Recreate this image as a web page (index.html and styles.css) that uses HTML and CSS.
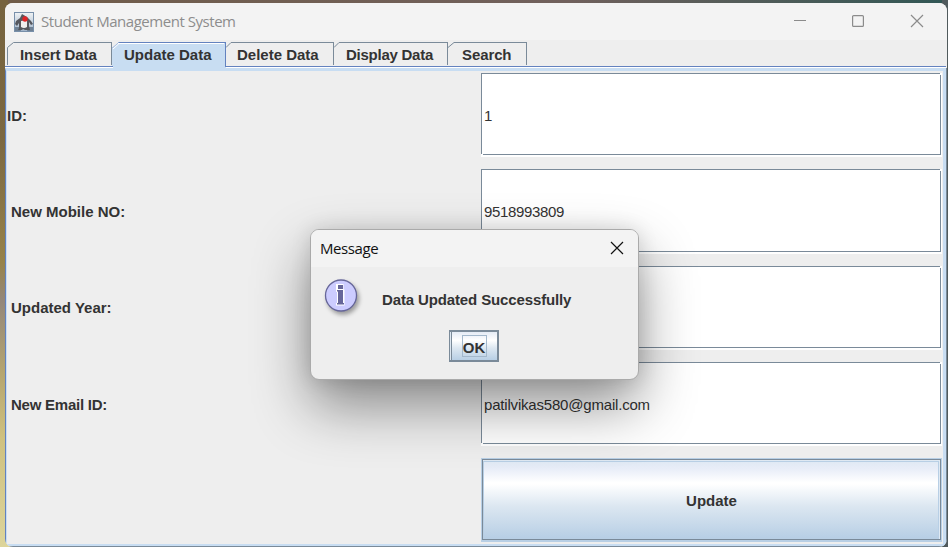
FILE: index.html
```
<!DOCTYPE html>
<html lang="en">
<head>
<meta charset="utf-8">
<title>Student Management System</title>
<link rel="stylesheet" href="styles.css">
</head>
<body>
<main class="window">
  <header class="titlebar">
    <svg class="app-icon" width="20" height="20" viewBox="0 0 20 20">
      <defs><linearGradient id="sky" x2="0" y2="1"><stop stop-color="#f0f3f5"/><stop offset="1" stop-color="#9fb3c8"/></linearGradient></defs>
      <rect x=".5" y=".5" width="19" height="19" fill="url(#sky)" stroke="#7890aa"/>
      <path d="M1 15H6L7 19H1ZM14 15H19V19H13Z" fill="#6f8194"/>
      <path d="M8 2 6 6 2 9 1 12 3 14 5 11 5 16 4 18H8L9 17 11 18H16L15 14 15 10 17 13 19 12 17 9 13 5Z" fill="#55575d"/>
      <path d="M7 9Q10 8 13 9L13 15Q10 17 7 15Z" fill="#eee"/>
      <circle cx="11" cy="7" r="2.7" fill="#df2527"/>
    </svg>
    <h1 class="title">Student Management System</h1>
    <svg class="controls" width="129" height="14" viewBox="0 0 129 14" fill="none" stroke="#8b8b8b">
      <path d="M0 6.5H12"/><rect x="58.6" y="1.6" width="10.8" height="10.8" rx="1" stroke-width="1.2"/><path d="M117 1 129 13M129 1 117 13" stroke-width="1.2"/>
    </svg>
  </header>
  <nav class="tabs">
    <div class="tab first"><svg class="corner" width="8" height="8"><path d="M.5 8V5.5L6.5.5H8"/></svg>Insert Data</div>
    <div class="tab selected"><svg class="corner" width="8" height="8"><path d="M0 6 6 .5H8"/><path class="shine" d="M1 7 7 1.5"/></svg>Update Data</div>
    <div class="tab delete"><svg class="corner" width="8" height="8"><path d="M0 5.5 5 .5H8"/></svg>Delete Data</div>
    <div class="tab display"><svg class="corner" width="8" height="8"><path d="M0 5.5 5 .5H8"/></svg>Display Data</div>
    <div class="tab search"><svg class="corner" width="8" height="8"><path d="M0 5.5 6 .5H8"/></svg>Search</div>
  </nav>
  <section class="panel">
    <div class="label flush">ID:</div><div class="field">1</div>
    <div class="label">New Mobile NO:</div><div class="field phone">9518993809</div>
    <div class="label raised">Updated Year:</div><div class="field"></div>
    <div class="label tight">New Email ID:</div><div class="field email">patilvikas580@gmail.com</div>
    <div class="label"></div><button class="update">Update</button>
  </section>
</main>
<section class="dialog">
  <header class="dialog-bar">
    <h2 class="dialog-title">Message</h2>
    <svg class="close" width="14" height="14" viewBox="0 0 14 14" stroke="#111" stroke-width="1.2"><path d="M1 1 13 13M13 1 1 13"/></svg>
  </header>
  <div class="message">
    <svg class="info" width="40" height="40" viewBox="0 0 40 40">
      <circle cx="17" cy="16.5" r="15.5" fill="#ccccff" stroke="#666699" stroke-width="1.3"/>
      <path d="M12 5H19.5V10.5H20.5V26.5H12V24H13V13H12Z" fill="#fff"/>
      <path d="M14 6H19V10H14ZM13 11H19V24H20V25.5H13V24H14V12.5H13Z" fill="#666699"/>
    </svg>
    <span class="message-text">Data Updated Successfully</span>
  </div>
  <button class="ok"><span class="focus">OK</span></button>
</section>
</body>
</html>
```
FILE: styles.css
```
* { box-sizing: border-box; }
body {
  margin: 0;
  width: 948px;
  height: 547px;
  overflow: hidden;
  padding: 3px 1px 0 5px;
  background: linear-gradient(90deg, transparent 6px, transparent 942px, #505a5c 942px),
    linear-gradient(90deg, transparent 8px, #705c48 8px, #70605c 60%, #315755) 0 0 / 100% 3px no-repeat,
    linear-gradient(#76633e, #7c6841 25%, #97834a 48%, #94877a 55%, #b5a56f 68%, #cfc17f 80%, #ddd59b);
  font: 15px "Liberation Sans", Arial, sans-serif;
  color: #333;
}
h1, h2 { margin: 0; font-weight: 400; }
.window {
  display: flex;
  flex-direction: column;
  width: 942px;
  height: 544px;
  border-radius: 8px;
  overflow: hidden;
  background: #eee;
}
.titlebar {
  height: 37px;
  flex: none;
  display: flex;
  align-items: center;
  padding: 0 24px 0 9px;
  background: #f3f3f3;
}
.title {
  margin: 0 0 2px 7px;
  font: 15px "Open Sans", sans-serif;
  letter-spacing: -.46px;
  color: #8d8d8d;
  white-space: nowrap;
}
.controls { margin: 0 0 2px auto; overflow: visible; }
.tabs {
  height: 26px;
  flex: none;
  display: flex;
  padding: 2px 0 0 2px;
  font-weight: 700;
}
.tab {
  position: relative;
  height: 23px;
  border-right: 1px solid #7a8a99;
  background: linear-gradient(#7a8a99, #7a8a99) 8px 0 / 100% 1px no-repeat;
  padding: 4px 0 0 12px;
  line-height: 18px;
  white-space: nowrap;
}
.corner { position: absolute; left: 0; top: 0; fill: none; stroke: #7a8a99; }
.first {
  width: 105px;
  padding-left: 13px;
  letter-spacing: -.08px;
  background: linear-gradient(#7a8a99, #7a8a99) 7px 0 / 100% 1px no-repeat,
    linear-gradient(#7a8a99, #7a8a99) 0 7px / 1px 100% no-repeat;
}
.selected {
  width: 114px;
  height: 28px;
  z-index: 1;
  border-right: 0;
  background: linear-gradient(#6382bf, #6382bf) 113px 0 / 1px 25px no-repeat,
    linear-gradient(#6382bf, #6382bf) 8px 0 / 100% 1px no-repeat,
    linear-gradient(#fff, #fff) 6px 1px / 106px 1px no-repeat, #c8ddf2;
  clip-path: polygon(0 6px, 7px 0, 100% 0, 100% 100%, 1px 100%, 1px 24px, 0 24px);
}
.selected .corner { stroke: #6382bf; }
.selected .shine { stroke: #fff; }
.delete { width: 108px; padding-left: 11px; }
.display { width: 114px; letter-spacing: -.25px; }
.search { width: 79px; padding-left: 14px; letter-spacing: -.1px; }
.panel {
  flex: 1;
  display: grid;
  grid-template-columns: 475px 461px;
  grid-template-rows: 84px 85px 84px 84px 84px;
  row-gap: 12px;
  padding: 2px 0 0;
  border: solid #c8ddf2;
  border-width: 3px 3px 2px 1px;
  border-left-color: #6382bf;
  margin: 2px 1px 1px 0;
  box-shadow: 0 -1px #fff, 0 -2px #6382bf, 1px 0 #7a8a99, 0 1px #7a8a99, inset 1px 0 #c8ddf2;
}
.label {
  display: flex;
  align-items: center;
  padding: .8px 0 0 5px;
  font-weight: 700;
}
.flush { padding-left: 1px; }
.raised { padding-bottom: 1px; }
.tight { letter-spacing: -.24px; }
.field {
  display: flex;
  align-items: center;
  padding: .8px 0 0 3px;
  background: linear-gradient(#7a8a99, #7a8a99) 0 0 / 459px 1px no-repeat,
    linear-gradient(#7a8a99, #7a8a99) 0 0 / 1px calc(100% - 3px) no-repeat,
    linear-gradient(#7a8a99, #7a8a99) 2px calc(100% - 2px) / 458px 1px no-repeat,
    linear-gradient(#7a8a99, #7a8a99) 459px 2px / 1px calc(100% - 4px) no-repeat, #fff;
}
.phone { letter-spacing: -.34px; }
.email { letter-spacing: -.19px; }
.update, .ok {
  font: 700 15px "Liberation Sans", Arial, sans-serif;
  color: #333;
  border: 1px solid #b8cfe5;
  padding: 0;
}
.update {
  border-bottom-width: 2px;
  padding-top: 2px;
  background: linear-gradient(#dde8f3, #e8edf8 12%, #fff 29%, #fff 31%, #dce7f1 58%, #b8cfe5 97%);
  box-shadow: inset 0 0 0 1px #7a8a99, inset 0 2px #dfe9f3, inset -2px 0 #dfe9f3, inset 0 3px #b8cfe5, inset 2px 0 #b8cfe5, inset -3px 0 #b8cfe5;
}
.dialog {
  position: absolute;
  left: 310px;
  top: 229px;
  width: 329px;
  height: 151px;
  border: 1px solid #aaa;
  border-radius: 9px;
  background: #eee;
  box-shadow: 0 26px 56px rgba(0, 0, 0, .43), 0 0 20px rgba(0, 0, 0, .12);
  overflow: hidden;
}
.dialog-bar {
  height: 37px;
  display: flex;
  align-items: center;
  justify-content: space-between;
  padding: 0 14px 2px 9px;
  background: #f3f3f3;
}
.dialog-title { font: 15px "Open Sans", sans-serif; letter-spacing: -.4px; color: #111; }
.message { display: flex; height: 63px; padding: 12px 0 0 13px; font-weight: 700; }
.info { filter: drop-shadow(2px 3px 2px rgba(0, 0, 0, .35)); }
.message-text { margin: 12px 0 0 18px; line-height: 18px; white-space: nowrap; letter-spacing: -.13px; }
.ok {
  display: flex;
  align-items: center;
  justify-content: center;
  width: 50px;
  height: 32px;
  margin-left: 138px;
  border: 2px solid #7a8a99;
  border-left-width: 1px;
  background: linear-gradient(#e4ebf5, #fff 30%, #dce7f1 58%, #b8cfe5);
  box-shadow: inset 1px 0 #dce6f0, inset 2px 0 #7a8a99;
}
.focus {
  display: flex;
  justify-content: center;
  width: 25px;
  height: 22px;
  margin-left: 1px;
  border: 1px solid #a3b8cc;
  line-height: 24px;
}
```
